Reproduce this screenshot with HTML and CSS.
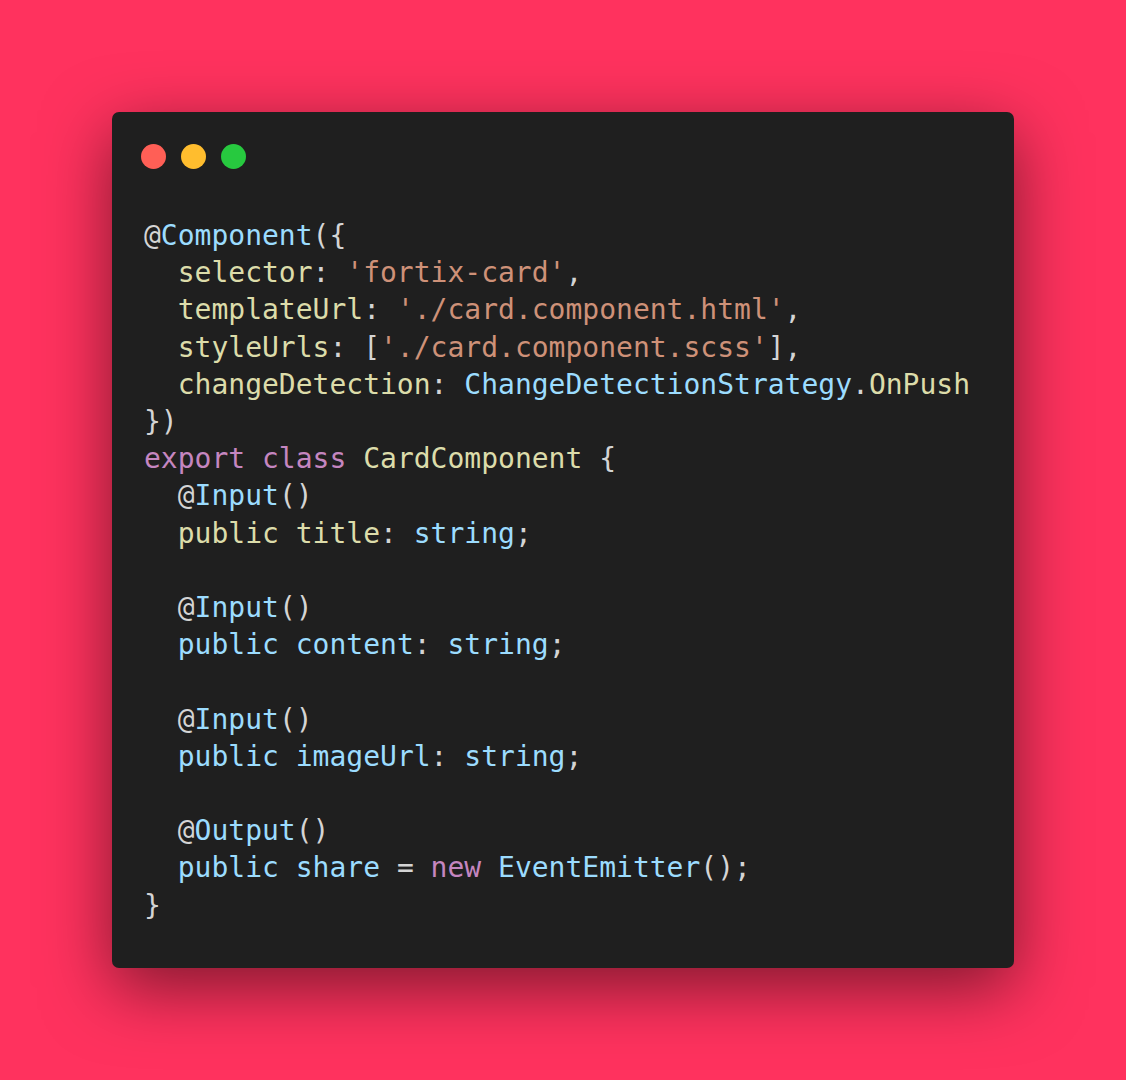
FILE: index.html
```html
<!DOCTYPE html>
<html>
<head>
<meta charset="utf-8">
<link rel="stylesheet" href="styles.css">
</head>
<body>
<div class="card">
  <div class="dots">
    <span class="dot red"></span>
    <span class="dot yellow"></span>
    <span class="dot green"></span>
  </div>
<pre class="code"><span class="p">@</span><span class="b">Component</span><span class="p">({</span>
  <span class="y">selector</span><span class="p">: </span><span class="s">'fortix-card'</span><span class="p">,</span>
  <span class="y">templateUrl</span><span class="p">: </span><span class="s">'./card.component.html'</span><span class="p">,</span>
  <span class="y">styleUrls</span><span class="p">: [</span><span class="s">'./card.component.scss'</span><span class="p">],</span>
  <span class="y">changeDetection</span><span class="p">: </span><span class="b">ChangeDetectionStrategy</span><span class="p">.</span><span class="y">OnPush</span>
<span class="p">})</span>
<span class="k">export</span> <span class="k">class</span> <span class="y">CardComponent</span> <span class="p">{</span>
  <span class="p">@</span><span class="b">Input</span><span class="p">()</span>
  <span class="y">public</span> <span class="y">title</span><span class="p">: </span><span class="b">string</span><span class="p">;</span>

  <span class="p">@</span><span class="b">Input</span><span class="p">()</span>
  <span class="b">public</span> <span class="b">content</span><span class="p">: </span><span class="b">string</span><span class="p">;</span>

  <span class="p">@</span><span class="b">Input</span><span class="p">()</span>
  <span class="b">public</span> <span class="b">imageUrl</span><span class="p">: </span><span class="b">string</span><span class="p">;</span>

  <span class="p">@</span><span class="b">Output</span><span class="p">()</span>
  <span class="b">public</span> <span class="b">share</span> <span class="p">=</span> <span class="k">new</span> <span class="b">EventEmitter</span><span class="p">();</span>
<span class="p">}</span></pre>
</div>
</body>
</html>
```
FILE: styles.css
```css
html, body {
  margin: 0;
  padding: 0;
}
body {
  background: #ff325e;
  height: 1080px;
  display: flex;
  align-items: center;
  justify-content: center;
}
.card {
  width: 902px;
  height: 856px;
  box-sizing: border-box;
  background: #1f1f1f;
  border-radius: 7px;
  box-shadow: 0 20px 68px rgba(0, 0, 0, 0.5);
  padding: 32px 0 0 29px;
}
.dots {
  display: flex;
  gap: 15px;
  height: 24px;
}
.dot {
  width: 25px;
  height: 25px;
  border-radius: 50%;
}
.red { background: #ff5f56; }
.yellow { background: #ffbd2e; }
.green { background: #27c93f; }
.code {
  margin: 49px 0 0 3px;
  font-family: "DejaVu Sans Mono", monospace;
  font-size: 28px;
  line-height: 37.2px;
  color: #d4d4d4;
}
.p { color: #d4d4d4; }
.b { color: #9cdcfe; }
.y { color: #dcdcaa; }
.s { color: #ce9178; }
.k { color: #c586c0; }
```
